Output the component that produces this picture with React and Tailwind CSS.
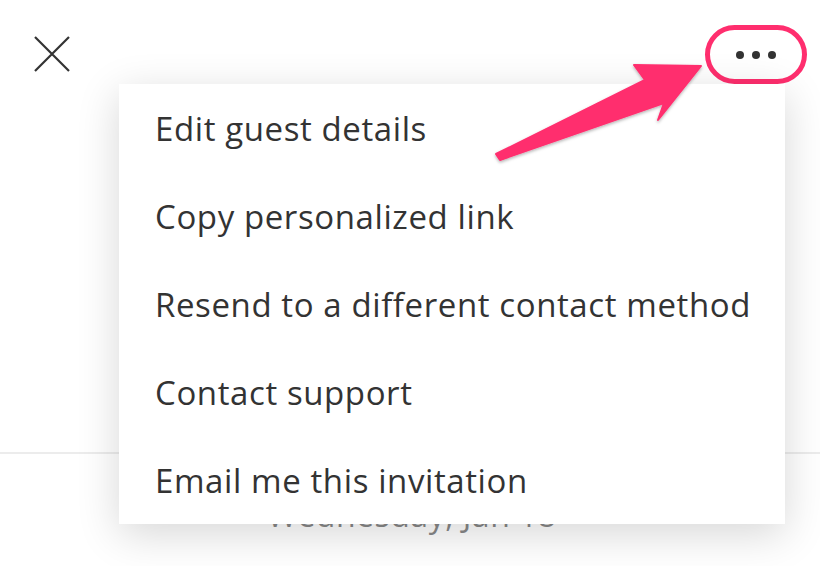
const items = [
  'Edit guest details',
  'Copy personalized link',
  'Resend to a different contact method',
  'Contact support',
  'Email me this invitation',
];

function CloseIcon() {
  return (
    <svg width="38" height="38" viewBox="0 0 38 38" fill="none">
      <path d="M2 2 L36 36 M36 2 L2 36" stroke="#333" strokeWidth="2.2" />
    </svg>
  );
}

function Arrow() {
  return (
    <svg className="absolute left-0 top-0 pointer-events-none" width="820" height="566" viewBox="0 0 820 566">
      <defs>
        <filter id="sh" x="-20%" y="-20%" width="140%" height="140%">
          <feDropShadow dx="0" dy="1.5" stdDeviation="1.5" floodColor="#000" floodOpacity="0.3" />
        </filter>
      </defs>
      <polygon
        points="496,154 645,80 634,65 701,66 658,120 664,103 500,160"
        fill="#ff2e6e"
        stroke="#ff2e6e"
        strokeWidth="2"
        strokeLinejoin="round"
        filter="url(#sh)"
      />
    </svg>
  );
}

export default function App() {
  return (
    <div
      className="relative w-[820px] h-[566px] overflow-hidden bg-white text-[#333]"
      style={{ fontFamily: '"Open Sans", "Noto Sans", sans-serif' }}
    >
      <div className="flex items-center justify-between pl-[33px] pr-[13px] pt-[25px]">
        <button className="mt-[-2px]">
          <CloseIcon />
        </button>
        <button className="flex items-center justify-center gap-[8px] w-[102px] h-[59px] rounded-full border-[5px] border-[#ff2e6e] bg-white">
          <span className="w-[8px] h-[8px] rounded-full bg-[#333]" />
          <span className="w-[8px] h-[8px] rounded-full bg-[#333]" />
          <span className="w-[8px] h-[8px] rounded-full bg-[#333]" />
        </button>
      </div>

      <div className="h-[368px]" />
      <div className="border-t-2 border-[#ececec]" />
      <div className="pt-[45px] text-center text-[32px] leading-none tracking-[0.5px] text-[#888] pl-[4px]">Wednesday, Jan 18</div>

      <div className="absolute left-[119px] top-[84px] w-[666px] bg-white shadow-[0_10px_40px_rgba(0,0,0,0.16)]">
        {items.map((t) => (
          <div key={t} className="h-[88px] flex items-center pl-[36px] text-[33px] leading-none tracking-[0.6px] text-[#333]">
            {t}
          </div>
        ))}
      </div>

      <Arrow />
    </div>
  );
}
